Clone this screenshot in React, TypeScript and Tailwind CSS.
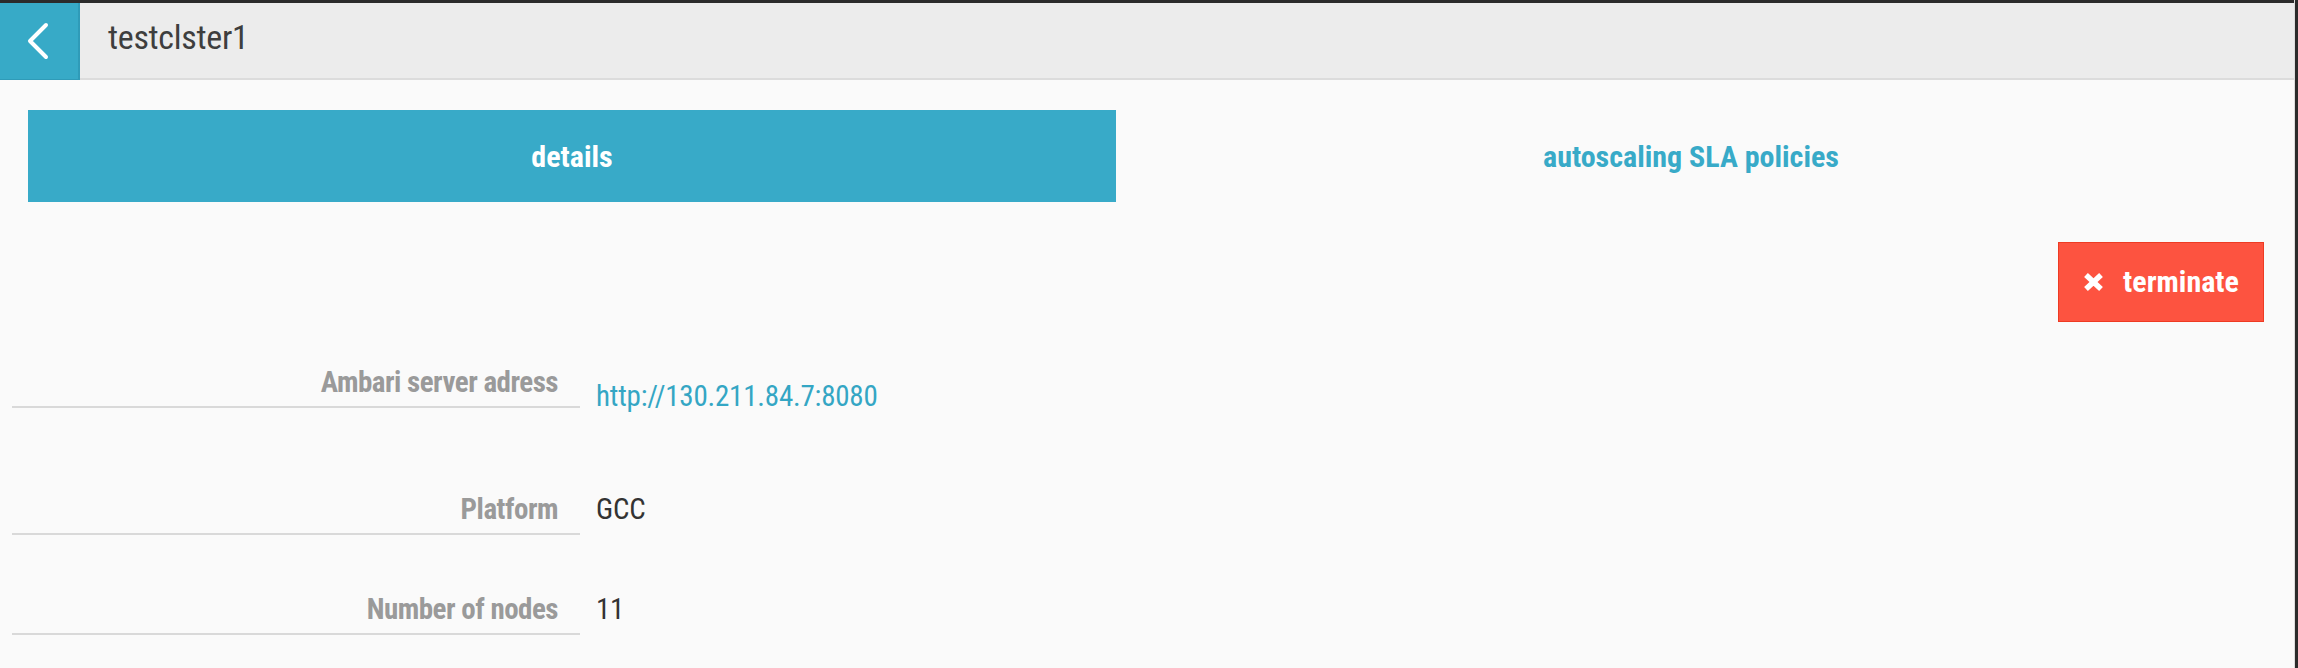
import React from "react";

const rows = [
  { label: "Ambari server adress", value: "http://130.211.84.7:8080", link: true },
  { label: "Platform", value: "GCC" },
  { label: "Number of nodes", value: "11" },
];

function BackIcon() {
  return (
    <svg width="24" height="38" viewBox="0 0 24 38" fill="none">
      <path d="M20 3 L4 19 L20 35" stroke="white" strokeWidth="4" strokeLinecap="round" strokeLinejoin="round" />
    </svg>
  );
}

function TimesIcon() {
  return (
    <svg width="21" height="18" viewBox="0 0 21 18">
      <path d="M3 2 L18 16 M18 2 L3 16" stroke="white" strokeWidth="5.5" strokeLinecap="butt" />
    </svg>
  );
}

export default function App() {
  return (
    <div className="flex h-[668px] w-[2298px] bg-[#2b2b2b] font-['Roboto',sans-serif] font-stretch-condensed">
      <div className="flex flex-1 flex-col pt-[3px]">
        {/* header */}
        <div className="flex h-[77px] items-start border-b-2 border-[#dcdcdc] bg-[#ececec]">
          <button className="flex h-[78px] w-[80px] items-center justify-center border-r-2 border-b-2 border-[#2f9bb8] bg-[#37aac7] pr-[2px]">
            <BackIcon />
          </button>
          <div className="ml-[28px] pt-[12px] text-[34px] leading-[44px] tracking-[-0.3px] text-[#3e3e3e]">testclster1</div>
        </div>

        <div className="flex flex-1 flex-col bg-[#fafafa] px-[28px] pt-[30px]">
          {/* tabs */}
          <div className="flex h-[92px]">
            <div className="flex w-[1088px] items-center justify-center bg-[#38aac8] text-[30px] font-bold text-white">
              details
            </div>
            <div className="flex flex-1 items-center justify-center text-[30px] font-bold text-[#38aac8]">
              autoscaling SLA policies
            </div>
          </div>

          <div className="mt-[40px] flex justify-end pr-[2px]">
            <button className="flex h-[80px] w-[206px] items-center justify-center gap-[19px] border border-[#ee3b23] bg-[#fd5340] text-[30px] font-bold text-white">
              <TimesIcon />
              <span className="pb-[2px]">terminate</span>
            </button>
          </div>

          {/* details */}
          <div className="-ml-[16px] mt-[42px] flex flex-col">
            {rows.map((row, i) => (
              <div key={row.label} className={`flex items-start ${i === 1 ? "mt-[77px]" : ""} ${i === 2 ? "mt-[56px]" : ""}`}>
                <div className="w-[568px] border-b-2 border-[#d9d9d9] pb-[6px] pr-[22px] text-right text-[29px] font-bold leading-[36px] tracking-[-0.5px] text-[#9a9a9a]">
                  {row.label}
                </div>
                <div
                  className={`ml-[16px] text-[29px] leading-[36px] tracking-[-0.2px] ${
                    row.link ? "mt-[14px] text-[#34a6c4]" : "text-[#333333]"
                  }`}
                >
                  {row.value}
                </div>
              </div>
            ))}
          </div>
        </div>
      </div>
      <div className="w-[4px] border-l border-[#dddddd] bg-[#2b2b2b]" />
    </div>
  );
}
